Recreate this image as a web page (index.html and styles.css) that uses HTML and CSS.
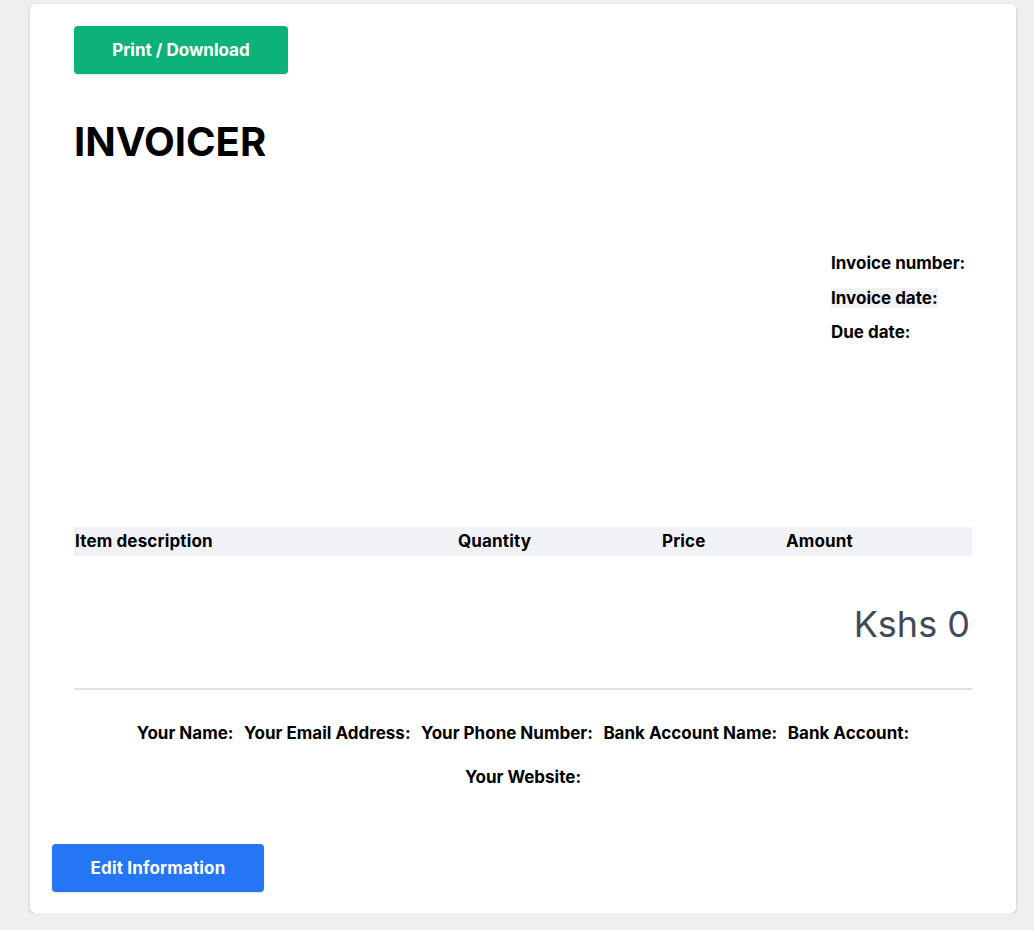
FILE: index.html
```
<!DOCTYPE html>
<html>
<head>
<meta charset="utf-8">
<link rel="stylesheet" href="styles.css">
</head>
<body>
<main class="card">
  <section class="invoice">
    <button class="btn btn-print">Print / Download</button>
    <h1 class="title">INVOICER</h1>
    <div class="meta">
      <ul class="meta-list">
        <li>Invoice number:</li>
        <li><span class="hl">Invoice date:</span></li>
        <li>Due date:</li>
      </ul>
    </div>
    <div class="table-head">
      <span>Item description</span>
      <span>Quantity</span>
      <span>Price</span>
      <span>Amount</span>
    </div>
    <div class="total">Kshs 0</div>
    <hr class="rule">
    <footer class="contact">
      <div class="contact-row">
        <span>Your Name:</span>
        <span>Your Email Address:</span>
        <span>Your Phone Number:</span>
        <span>Bank Account Name:</span>
        <span>Bank Account:</span>
      </div>
      <div class="contact-row">
        <span>Your Website:</span>
      </div>
    </footer>
  </section>
  <button class="btn btn-edit">Edit Information</button>
</main>
</body>
</html>
```
FILE: styles.css
```
* { box-sizing: border-box; }
html, body { margin: 0; padding: 0; }
body {
  background: #efefef;
  font-family: Inter, "Noto Sans", "Liberation Sans", sans-serif;
  color: #000;
  padding-top: 4px;
}
.card {
  margin-left: 30px;
  width: 986px;
  height: 909px;
  background: #fff;
  border-radius: 5px;
  box-shadow: 0 1px 3px rgba(0,0,0,0.18), 0 1px 2px rgba(0,0,0,0.08);
  padding: 22px 44px 0 44px;
  display: flex;
  flex-direction: column;
}
.invoice { display: flex; flex-direction: column; }
.btn {
  border: none;
  border-radius: 4px;
  color: #fff;
  font-family: inherit;
  font-weight: 700;
  font-size: 17px;
  height: 48px;
  box-shadow: 0 1px 2px rgba(0,0,0,0.12);
  cursor: pointer;
}
.btn-print {
  background: #0db27a;
  width: 214px;
  align-self: flex-start;
}
.title {
  margin: 48px 0 0 0;
  font-size: 40px;
  line-height: 40px;
  font-weight: 700;
}
.meta {
  display: flex;
  justify-content: flex-end;
  margin-top: 90px;
}
.meta-list {
  list-style: none;
  margin: 0;
  padding: 0;
  width: 141px;
  font-weight: 700;
  font-size: 17px;
}
.meta-list li {
  line-height: 22px;
  height: 22px;
  margin-bottom: 12.5px;
  white-space: nowrap;
}
.hl { background: #f1f2f5; }
.table-head {
  margin-top: 171px;
  height: 29px;
  background: #f1f2f5;
  display: grid;
  grid-template-columns: 384px 204px 124px 1fr;
  align-items: center;
  font-weight: 700;
  font-size: 17px;
  letter-spacing: 0.15px;
}
.table-head span:first-child { padding-left: 1px; }
.total {
  margin-top: 46px;
  text-align: right;
  font-size: 36px;
  line-height: 44px;
  color: #414a58;
  padding-right: 2px;
}
.rule {
  margin: 42px 0 0 0;
  border: none;
  border-top: 2px solid #e0e1e4;
  height: 0;
}
.contact {
  margin-top: 32px;
  font-weight: 700;
  font-size: 17px;
}
.contact-row {
  display: flex;
  justify-content: center;
  gap: 10.5px;
  line-height: 22px;
  margin-bottom: 22px;
}
.btn-edit {
  background: #2476f5;
  width: 212px;
  margin-left: -22px;
  margin-top: 34px;
  align-self: flex-start;
  letter-spacing: 0.15px;
}
```
